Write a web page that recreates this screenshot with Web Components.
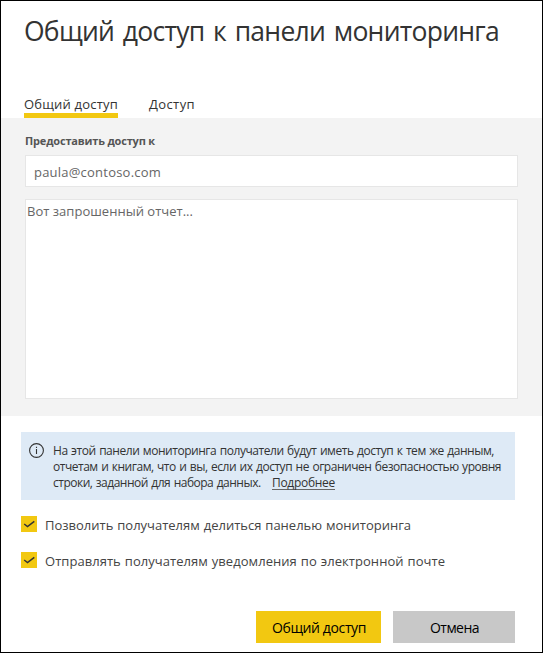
<!DOCTYPE html>
<html lang="ru">
<head>
<meta charset="utf-8">
<title>Общий доступ к панели мониторинга</title>
<style>
html, body { margin: 0; height: 100%; }
body { font-family: "Open Sans", "Noto Sans", sans-serif; color: #333; background: #fff; }
</style>
</head>
<body>
<share-dialog></share-dialog>
<script>
function define(name, html, Base = HTMLElement) {
  const template = document.createElement('template');
  template.innerHTML = html;
  customElements.define(name, class extends Base {
    constructor() {
      super();
      this.attachShadow({ mode: 'open' }).append(template.content.cloneNode(true));
    }
  });
}

/* One line of text, tracked so that it occupies the length given in "w". */
class TrackedText extends HTMLElement {
  connectedCallback() {
    const target = parseFloat(this.getAttribute('w'));
    const width = this.getBoundingClientRect().width;
    const count = this.textContent.length;
    if (target && width) this.style.letterSpacing = ((target - width) / count).toFixed(4) + 'px';
  }
}
define('tracked-text', `<style>:host{display:inline-block;white-space:pre}</style><slot></slot>`, TrackedText);

define('dialog-tab', `<style>
:host{display:block;box-sizing:border-box;height:24px;font-size:13px;line-height:20px;border-bottom:5px solid transparent;color:#333}
:host([selected]){border-color:#f2c811}
</style><slot></slot>`);

define('text-box', `<style>
:host{display:block;box-sizing:border-box;background:#fff;border:1px solid #e6e6e6;color:#666;font-size:13px;line-height:20px;height:32px;padding:6px 8px}
:host([multiline]){height:200px;padding:1px}
</style><slot></slot>`);

define('info-banner', `<style>
:host{display:flex;box-sizing:border-box;height:68px;background:#deeaf6;padding:11px 0 0 8px;gap:9px;font-size:12px;word-spacing:.8px;line-height:16px;color:#333}
svg{flex:none;width:15px;height:15px}
div{display:grid;grid-auto-rows:16px;justify-items:start}
</style>
<svg viewBox="0 0 15 15"><circle cx="7.5" cy="7.5" r="6.9" fill="none" stroke="#333" stroke-width="1.1"/><path d="M7.5 6v5M7.5 3.7v1.2" stroke="#333" stroke-width="1.1"/></svg>
<div><slot></slot></div>`);

define('check-option', `<style>
:host{display:flex;height:16px;gap:8px;align-items:center;font-size:13px;word-spacing:.6px;line-height:20px;color:#444}
svg{flex:none;width:16px;height:16px;background:#f2c811}
span{position:relative;top:1px}
</style>
<svg viewBox="0 0 16 16"><path d="M3.2 8l3.3 2.5L13.3 5.3" fill="none" stroke="#333" stroke-width="1.5"/></svg>
<span><slot></slot></span>`);

define('action-button', `<style>
:host{display:flex;width:122px;height:32px;background:#c8c8c8;align-items:center;justify-content:center;font-size:14px;line-height:20px;color:#000}
:host([primary]){width:125px;background:#f2c811}
slot{display:block;padding:2px 0 0 1px}
</style><slot></slot>`);

define('share-dialog', `<style>
:host{display:flex;flex-direction:column;box-sizing:border-box;width:543px;height:653px;border:1px solid #000;background:#fff}
h1{margin:0;padding:10px 0 0 23px;height:83px;box-sizing:border-box;font-size:26.5px;word-spacing:2.5px;line-height:40px;font-weight:400;color:#333}
nav{display:flex;gap:31px;padding:10px 0 0 23px}
section{box-sizing:border-box;height:298px;background:#f3f3f3;padding:13px 24px 0 24px}
label{display:block;height:24px;font-size:11px;font-weight:700;line-height:20px;color:#555}
text-box + text-box{margin-top:12px}
main{padding:16px 27px 0 20px}
check-option{margin-top:20px}
info-banner + check-option{margin-top:16px}
a{color:inherit;margin-left:8px;display:inline-block;height:14px;line-height:16px;border-bottom:1px solid #666}
.last{display:flex}
footer{display:flex;justify-content:flex-end;gap:12px;padding:43px 27px 0 0}
</style>
<h1><tracked-text w="475">Общий доступ к панели мониторинга</tracked-text></h1>
<nav>
<dialog-tab selected><tracked-text w="94">Общий доступ</tracked-text></dialog-tab>
<dialog-tab><tracked-text w="46">Доступ</tracked-text></dialog-tab>
</nav>
<section>
<label><tracked-text w="130">Предоставить доступ к</tracked-text></label>
<text-box><tracked-text w="127">paula@contoso.com</tracked-text></text-box>
<text-box multiline><tracked-text w="166">Вот запрошенный отчет...</tracked-text></text-box>
</section>
<main>
<info-banner>
<tracked-text w="441">На этой панели мониторинга получатели будут иметь доступ к тем же данным,</tracked-text>
<tracked-text w="448">отчетам и книгам, что и вы, если их доступ не ограничен безопасностью уровня</tracked-text>
<span class="last"><tracked-text w="211">строки, заданной для набора данных. </tracked-text><a><tracked-text w="63">Подробнее</tracked-text></a></span>
</info-banner>
<check-option><tracked-text w="366">Позволить получателям делиться панелью мониторинга</tracked-text></check-option>
<check-option><tracked-text w="400">Отправлять получателям уведомления по электронной почте</tracked-text></check-option>
</main>
<footer>
<action-button primary><tracked-text w="94">Общий доступ</tracked-text></action-button>
<action-button><tracked-text w="49">Отмена</tracked-text></action-button>
</footer>`);
</script>
</body>
</html>
